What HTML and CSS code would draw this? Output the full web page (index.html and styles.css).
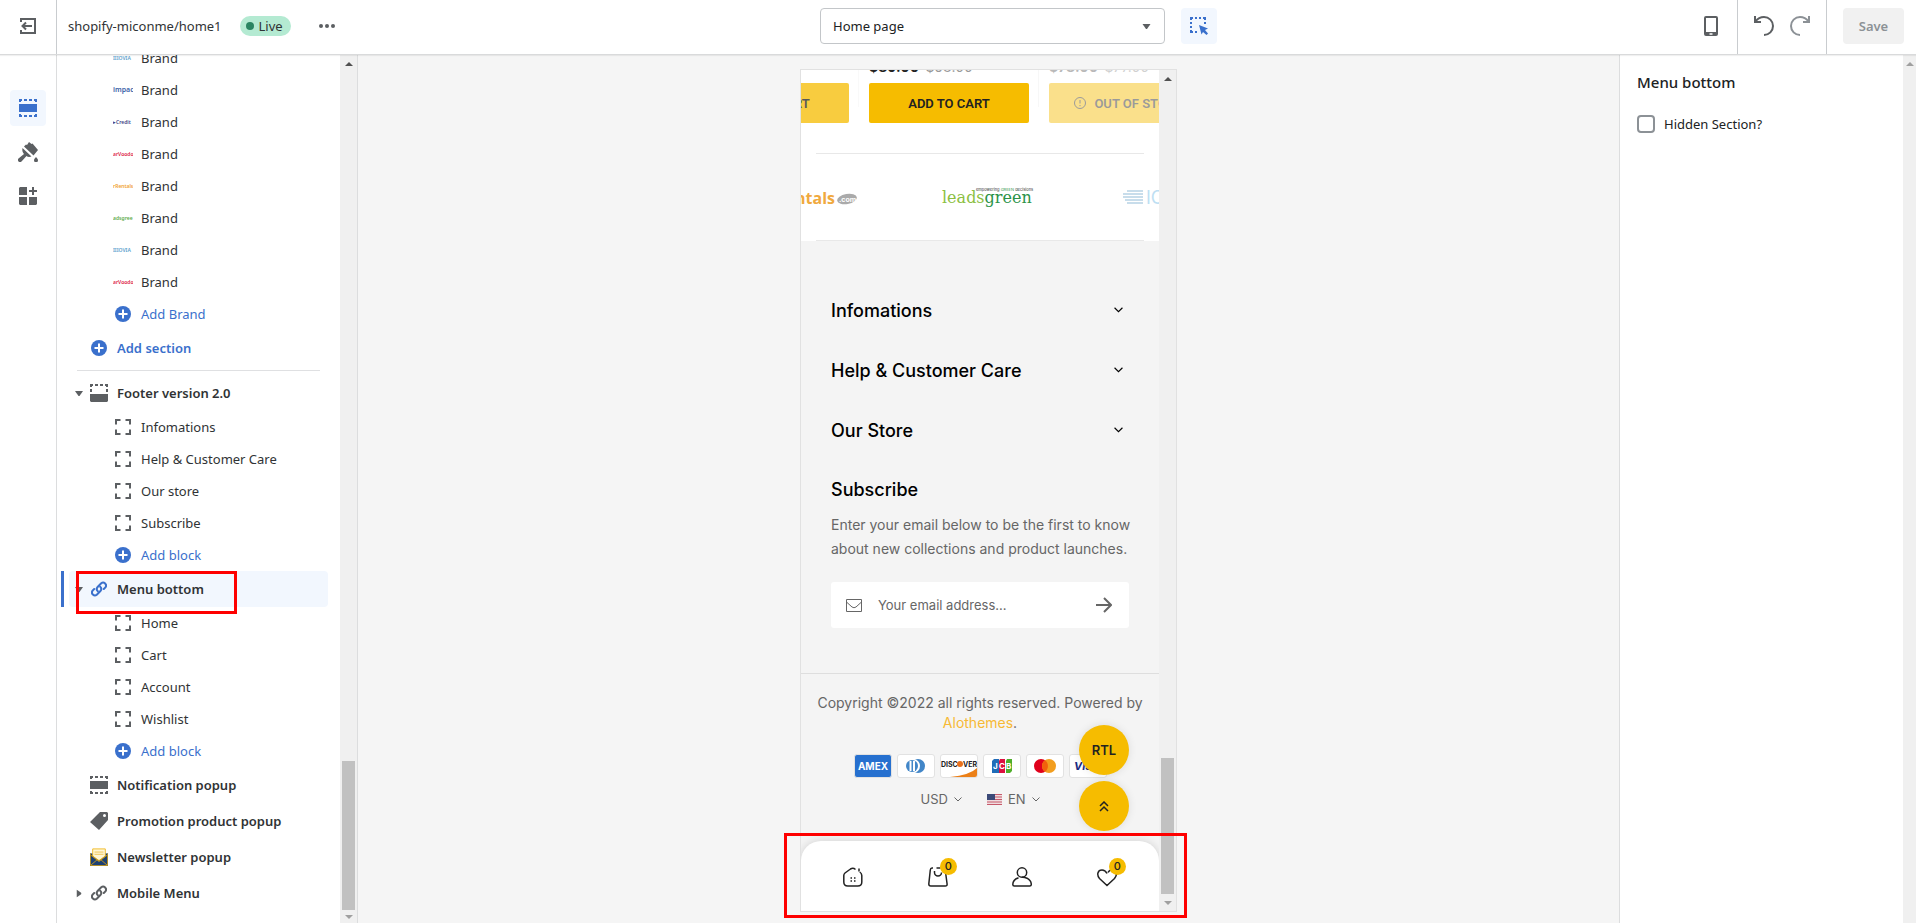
FILE: index.html
```
<!DOCTYPE html>
<html lang="en">
<head>
  <meta charset="utf-8">
  <title>Theme editor</title>
  <link rel="stylesheet" href="styles.css">
</head>
<body>
  <svg class="sprite" aria-hidden="true">
    <symbol id="i-block" viewBox="0 0 16 16">
      <path d="M1 5.500V1h4.500M10.500 1H15v4.500M15 10.500V15h-4.500M5.500 15H1v-4.500" fill="none" stroke="currentColor" stroke-width="2"/>
    </symbol>
    <symbol id="i-plus" viewBox="0 0 16 16">
      <circle cx="8" cy="8" r="8" fill="currentColor"/>
      <path d="M8 3.500v9M3.500 8h9" stroke="#fff" stroke-width="2"/>
    </symbol>
    <symbol id="i-section" viewBox="0 0 18 18">
      <path d="M0 5h18v8H0z" fill="currentColor"/>
      <path d="M0 1h3M5 1h3M10 1h3M15 1h3M0 17h3M5 17h3M10 17h3M15 17h3M1 0v3M17 0v3M1 15v3M17 15v3" stroke="currentColor" stroke-width="2"/>
    </symbol>
    <symbol id="i-footer" viewBox="0 0 18 18">
      <path d="M0 10h18v7l-1 1H1l-1-1z" fill="currentColor"/>
      <path d="M0 1h3M5 1h3M10 1h3M15 1h3M1 0v3M17 0v3M1 5v3M17 5v3" stroke="currentColor" stroke-width="2"/>
    </symbol>
    <symbol id="i-link" viewBox="0 0 16 16">
      <g fill="none" stroke="currentColor" stroke-width="2" stroke-linecap="round">
        <path d="M6.800 10.200a3 3 0 0 1-.2-4.200l3.600-3.800a3 3 0 0 1 4.200 4.200L12.800 8"/>
        <path d="M9.200 5.800a3 3 0 0 1 .2 4.200l-3.600 3.800a3 3 0 0 1-4.200-4.200L3.200 8"/>
      </g>
    </symbol>
    <symbol id="i-down" viewBox="0 0 8 5">
      <path d="M0 0h8L4.500 5h-1z" fill="currentColor"/>
    </symbol>
    <symbol id="i-chevron" viewBox="0 0 8 5">
      <path d="M.5.5 4 4 7.500.5" fill="none" stroke="currentColor"/>
    </symbol>
  </svg>

  <header class="topbar">
    <div class="topbar-exit">
      <button class="icon-btn" aria-label="Exit">
        <svg width="16" height="16" viewBox="0 0 16 16" fill="none" stroke="currentColor" stroke-width="2"><path d="M1 4V1h14v14H1v-3M12 8H3M6 4.500 2.500 8 6 11.500"/></svg>
      </button>
    </div>
    <div class="topbar-title">
      <span class="theme-name">shopify-miconme/home1</span>
      <span class="badge"><span class="badge-dot"></span>Live</span>
      <button class="icon-btn" aria-label="More actions">
        <svg width="16" height="4" viewBox="0 0 16 4" fill="currentColor"><circle cx="2" cy="2" r="2"/><circle cx="8" cy="2" r="2"/><circle cx="14" cy="2" r="2"/></svg>
      </button>
    </div>
    <div class="topbar-center">
      <div class="page-select">
        <select aria-label="Page"><option>Home page</option></select>
        <svg class="page-caret" width="9" height="5"><use href="#i-down"/></svg>
      </div>
      <button class="icon-btn active" aria-label="Toggle inspector">
        <svg width="18" height="18" viewBox="0 0 18 18" fill="none" stroke="currentColor" stroke-width="2"><path d="M0 1h3M5 1h2M9 1h2M13 1h3M1 0v3M1 5v2M1 9v2M1 13v3M0 15h3M5 15h2M15 0v3M15 5v2"/><path d="m9 8 9 3.500-3 1.500 3 3.500-1.500 1.500-3.500-3-1.500 2.500z" fill="currentColor" stroke="none"/></svg>
      </button>
    </div>
    <div class="topbar-group device">
      <button class="icon-btn" aria-label="Mobile view">
        <svg width="14" height="20" viewBox="0 0 14 20"><path d="M2 0h10a2 2 0 0 1 2 2v16a2 2 0 0 1-2 2H2a2 2 0 0 1-2-2V2a2 2 0 0 1 2-2zm0 2v14h10V2zm3.500 15.300v1.400h3v-1.400z" fill="currentColor" fill-rule="evenodd"/></svg>
      </button>
    </div>
    <div class="topbar-group">
      <button class="icon-btn" aria-label="Undo">
        <svg width="20" height="20" viewBox="0 0 20 20" fill="none" stroke="currentColor" stroke-width="2"><path d="M1 0v6h6M1.500 5.500C3.500 2.700 6.500 1 10 1a9 9 0 0 1 9 9c0 5-4 9-9 9"/></svg>
      </button>
      <button class="icon-btn muted" aria-label="Redo">
        <svg width="20" height="20" viewBox="0 0 20 20" fill="none" stroke="currentColor" stroke-width="2"><path d="M19 0v6h-6M18.500 5.500C16.500 2.700 13.500 1 10 1a9 9 0 0 0-9 9c0 5 4 9 9 9"/></svg>
      </button>
    </div>
    <div class="topbar-group save">
      <button class="save-btn" disabled>Save</button>
    </div>
  </header>

  <div class="layout">
    <nav class="rail">
      <button class="icon-btn active" aria-label="Sections"><svg width="18" height="18"><use href="#i-section"/></svg></button>
      <button class="icon-btn" aria-label="Theme settings">
        <svg width="20" height="20" viewBox="0 0 20 20" fill="currentColor"><path d="m11 0 2.500 2 1-.5 5.500 6.500-4.500 5.500L6 4.500 8 2.500l1 .5z"/><path d="m4.500 6 9 8.500c-2 .8-4 .5-5-.5L3.500 19.500a2 2 0 0 1-3-3L6 12c-1.500-1.500-2-3.500-1.500-6zM18 15c1.200 1.500 2 2.300 2 3.200a2 2 0 0 1-4 0c0-.9.800-1.700 2-3.200z"/></svg>
      </button>
      <button class="icon-btn" aria-label="App embeds">
        <svg width="18" height="18" viewBox="0 0 18 18" fill="currentColor"><path d="M1 0h7v8H0V1zM0 10h8v8H1l-1-1zM10 10h8v7l-1 1h-7zM13 0h2v3h3v2h-3v3h-2V5h-3V3h3z"/></svg>
      </button>
    </nav>

    <aside class="sidebar">
      <div class="tree">
        <div class="row block"><span class="thumb sky">IIIOVIA</span>Brand</div>
        <div class="row block"><span class="thumb navy">impac</span>Brand</div>
        <div class="row block"><span class="thumb indigo">▸Credit</span>Brand</div>
        <div class="row block"><span class="thumb red">arVoodo</span>Brand</div>
        <div class="row block"><span class="thumb orange">rRentals</span>Brand</div>
        <div class="row block"><span class="thumb green">adsgree</span>Brand</div>
        <div class="row block"><span class="thumb sky">IIIOVIA</span>Brand</div>
        <div class="row block"><span class="thumb red">arVoodo</span>Brand</div>
        <button class="row block add"><svg class="icon"><use href="#i-plus"/></svg>Add Brand</button>
        <button class="row section add"><span class="toggle"></span><svg class="icon"><use href="#i-plus"/></svg>Add section</button>
        <hr class="tree-divider">

        <div class="row section"><svg class="toggle"><use href="#i-down"/></svg><svg class="icon"><use href="#i-footer"/></svg>Footer version 2.0</div>
        <div class="row block"><svg class="icon"><use href="#i-block"/></svg>Infomations</div>
        <div class="row block"><svg class="icon"><use href="#i-block"/></svg>Help &amp; Customer Care</div>
        <div class="row block"><svg class="icon"><use href="#i-block"/></svg>Our store</div>
        <div class="row block"><svg class="icon"><use href="#i-block"/></svg>Subscribe</div>
        <button class="row block add"><svg class="icon"><use href="#i-plus"/></svg>Add block</button>

        <div class="row section selected"><svg class="toggle"><use href="#i-down"/></svg><svg class="icon small"><use href="#i-link"/></svg>Menu bottom<span class="mark mark-row"></span></div>
        <div class="row block"><svg class="icon"><use href="#i-block"/></svg>Home</div>
        <div class="row block"><svg class="icon"><use href="#i-block"/></svg>Cart</div>
        <div class="row block"><svg class="icon"><use href="#i-block"/></svg>Account</div>
        <div class="row block"><svg class="icon"><use href="#i-block"/></svg>Wishlist</div>
        <button class="row block add"><svg class="icon"><use href="#i-plus"/></svg>Add block</button>

        <div class="row section"><span class="toggle"></span><svg class="icon"><use href="#i-section"/></svg>Notification popup</div>
        <div class="row section"><span class="toggle"></span>
          <svg class="icon" viewBox="0 0 18 18"><path d="M10 0h7l1 1v7l-9 10-9-8zm4.500 2a1.500 1.500 0 1 0 0 3 1.500 1.500 0 0 0 0-3z" fill="currentColor" fill-rule="evenodd"/></svg>Promotion product popup</div>
        <div class="row section"><span class="toggle"></span>
          <svg class="icon" viewBox="0 0 20 20">
            <path d="M0 6h20v14H0z" fill="#1d4073"/>
            <path d="M3 1h14v8l-7 5-7-5z" fill="#fff6d6" stroke="#efb81c"/>
            <path d="M5 4.500h10M5 7h10" stroke="#f0c24c"/>
            <path d="M.5 6v13.500h19V6M1 8l9 7 9-7M1 19l7-6M19 19l-7-6" fill="none" stroke="#c99a1c"/>
          </svg>Newsletter popup</div>
        <div class="row section"><svg class="toggle closed"><use href="#i-down"/></svg><svg class="icon small"><use href="#i-link"/></svg>Mobile Menu</div>
      </div>
      <div class="scrollbar">
        <span class="arrow up"></span>
        <span class="thumb-bar"></span>
        <span class="arrow down off"></span>
      </div>
    </aside>

    <main class="canvas">
      <div class="phone">
        <div class="store">
          <div class="products">
            <div class="product side">
              <div class="price">$109.00 <del>$115.00</del></div>
              <button class="cart-btn">ADD TO CART</button>
            </div>
            <div class="product">
              <div class="price">$89.00 <del>$98.00</del></div>
              <button class="cart-btn">ADD TO CART</button>
            </div>
            <div class="product sold-out">
              <div class="price">$78.00 <del>$77.00</del></div>
              <button class="cart-btn">
                <svg width="12" height="12" viewBox="0 0 12 12" fill="none" stroke="currentColor"><circle cx="6" cy="6" r="5.500"/><path d="M6 3v3.500M6 8v1.200"/></svg>
                OUT OF STOCK
              </button>
            </div>
          </div>
          <div class="brands">
            <svg viewBox="0 0 180 40">
              <text x="120" y="27" font-size="16" font-weight="700" fill="#f0a93f" text-anchor="end" class="rentals">rRentals</text>
              <ellipse cx="132" cy="22" rx="10" ry="5" fill="#aaa" transform="rotate(-10 132 22)"/>
              <text x="124" y="25" font-size="7" font-weight="700" fill="#fff">.com</text>
            </svg>
            <svg viewBox="0 0 180 40">
              <text x="47" y="26" font-size="16" class="leads"><tspan fill="#8cc03f">leads</tspan><tspan fill="#2b9348">green</tspan></text>
              <text x="81" y="14" font-size="4" fill="#333">empowering <tspan fill="#2b9348">GREEN</tspan> decisions</text>
            </svg>
            <svg viewBox="0 0 180 40" class="faded">
              <path d="M52 14h16M48 17h20M48 20h20M50 23h18M52 26h16" stroke="#9fc3dd" stroke-width="1.500"/>
              <text x="71" y="27" font-size="18" fill="#a9d5ef">IOVIA</text>
            </svg>
          </div>
          <footer class="store-footer">
            <button class="fold">Infomations<svg width="9" height="6"><use href="#i-chevron"/></svg></button>
            <button class="fold">Help &amp; Customer Care<svg width="9" height="6"><use href="#i-chevron"/></svg></button>
            <button class="fold">Our Store<svg width="9" height="6"><use href="#i-chevron"/></svg></button>
            <h2 class="subscribe-title">Subscribe</h2>
            <p class="intro">Enter your email below to be the first to know about new collections and product launches.</p>
            <form class="subscribe">
              <svg width="16" height="13" viewBox="0 0 16 13" fill="none" stroke="currentColor"><path d="M.5.5h15v12H.5zM.5 3 6 8q2 1.500 4 0l5.500-5"/></svg>
              <input type="email" placeholder="Your email address..." aria-label="Your email address">
              <button class="send" aria-label="Subscribe">
                <svg width="16" height="16" viewBox="0 0 16 16" fill="none" stroke="currentColor" stroke-width="2"><path d="M0 8h14M8 1l7 7-7 7"/></svg>
              </button>
            </form>
          </footer>
          <div class="legal">
            <p>Copyright ©2022 all rights reserved. Powered by <a href="#">Alothemes</a>.</p>
            <div class="payments">
              <svg class="amex" viewBox="0 0 36 22"><text x="18" y="15" font-size="10" font-weight="700" fill="#fff" text-anchor="middle">AMEX</text></svg>
              <svg viewBox="0 0 36 22"><circle cx="20" cy="11" r="7" fill="#4286c8"/><circle cx="15" cy="11" r="7" fill="#fff"/><circle cx="14" cy="11" r="6" fill="#4286c8"/><path d="M12.500 6v10M16 6v10" stroke="#fff" stroke-width="2"/></svg>
              <svg viewBox="0 0 36 22"><path d="M9 22q20-2 27-9v9z" fill="#ec8018"/><text x="0" y="12" font-size="7" font-weight="700" fill="#222">DISC</text><circle cx="19" cy="9" r="3" fill="#e9711c"/><text x="22" y="12" font-size="7" font-weight="700" fill="#222">VER</text></svg>
              <svg viewBox="0 0 36 22"><path d="M10 4h5v14H8V6z" fill="#1f6cb8"/><path d="M16 4h5v14h-6V6z" fill="#dd1040"/><path d="M23 4h5v12l-2 2h-4V6z" fill="#4fae2a"/><text x="9" y="14" font-size="8" font-weight="700" fill="#fff">J</text><text x="15" y="14" font-size="8" font-weight="700" fill="#fff">C</text><text x="22" y="14" font-size="8" font-weight="700" fill="#fff">B</text></svg>
              <svg viewBox="0 0 36 22"><circle cx="14" cy="11" r="7" fill="#e0001b"/><circle cx="22" cy="11" r="7" fill="#f29e1f"/><path d="M18 5.300a7 7 0 0 1 0 11.400 7 7 0 0 1 0-11.400z" fill="#f2610c"/></svg>
              <svg viewBox="0 0 36 22"><text x="4" y="15" font-size="11" font-weight="700" font-style="italic" fill="#1b2a80">VISA</text></svg>
            </div>
            <div class="locale">
              <button>USD<svg width="8" height="5"><use href="#i-chevron"/></svg></button>
              <button>
                <svg class="flag" width="15" height="11" viewBox="0 0 15 11"><path d="M0 0h15v11H0z" fill="#f0dcdf"/><path d="M0 .5h15M0 3h15M0 5.500h15M0 8h15M0 10.500h15" stroke="#c65a6b"/><path d="M0 0h8v6H0z" fill="#3b4a78"/></svg>
                EN<svg width="8" height="5"><use href="#i-chevron"/></svg>
              </button>
            </div>
          </div>

          <div class="floating">
            <button>RTL</button>
            <button aria-label="Back to top">
              <svg width="10" height="11" viewBox="0 0 10 11" fill="none" stroke="currentColor" stroke-width="1.500"><path d="m1 5 4-4 4 4M1 10l4-4 4 4"/></svg>
            </button>
          </div>

          <nav class="bottom-nav">
            <a href="#" aria-label="Home"><svg width="20" height="20" viewBox="0 0 20 20"><path d="M16 4.500V1.500M12.500 2.500C10.500.700 9.500.700 7.500 2L2 6Q.800 7 .800 8.500V15q0 4 4 4h10q4 0 4-4V8.500q0-2-2-3.500"/><path d="M7.500 11h1.500M11 11h1.500M7.500 14h1.500M11 14h1.500"/></svg></a>
            <a href="#" aria-label="Cart"><svg width="20" height="20" viewBox="0 0 20 20"><path d="M5 1H4Q2.500 1 2.300 3L.800 17q0 2 2 2h14.500q2 0 1.800-2L17.500 5M8.500 1h4M6.500 4v1.500a3.500 3.500 0 0 0 7 0"/></svg><span class="count">0</span></a>
            <a href="#" aria-label="Account"><svg width="20" height="20" viewBox="0 0 20 20"><circle cx="10" cy="5.500" r="4.700"/><path d="M6.500 10.700C3 12 .800 14.500.800 17.500q0 1.500 1.500 1.500h15.500q1.500 0 1.500-1.500c0-3-2-5-4.300-6.300Q12.500 10 10 10.200"/></svg></a>
            <a href="#" aria-label="Wishlist"><svg width="20" height="20" viewBox="0 0 20 20"><path d="M11 5.500C12 3.500 13.500 3 15 3c5 0 5.500 5 2.500 8.500L10 18.500l-7.500-7C-.500 8 .500 3 5 3c2.500 0 4 1.500 5 3.500"/></svg><span class="count">0</span></a>
          </nav>
        </div>
        <div class="scrollbar">
          <span class="arrow up"></span>
          <span class="thumb-bar short"></span>
          <span class="arrow down"></span>
        </div>
        <span class="mark mark-nav"></span>
      </div>
    </main>

    <aside class="settings">
      <div class="settings-body">
        <h1>Menu bottom</h1>
        <label class="check"><input type="checkbox">Hidden Section?</label>
      </div>
      <div class="scrollbar narrow"><span class="arrow up off"></span></div>
    </aside>
  </div>
</body>
</html>
```
FILE: styles.css
```
* {
  box-sizing: border-box;
}

body {
  margin: 0;
  height: 100vh;
  display: flex;
  flex-direction: column;
  overflow: hidden;
  font-family: "Noto Sans", "Open Sans", sans-serif;
  font-size: 13px;
  color: #303335;
  background: #fff;
}

button,
input,
select {
  font: inherit;
  color: inherit;
}

button {
  border: none;
  background: none;
  padding: 0;
  cursor: pointer;
}

svg {
  flex: none;
}

.sprite {
  position: absolute;
  width: 0;
  height: 0;
}

/* Top bar */
.topbar {
  display: flex;
  flex: none;
  height: 55px;
  border-bottom: 1px solid #d9dadb;
  box-shadow: 0 1px 1px rgba(0, 0, 0, 0.06);
  position: relative;
  z-index: 2;
  background: #fff;
}

.topbar-exit {
  width: 57px;
  padding: 8px 10px;
  border-right: 1px solid #c9cccf;
}

.icon-btn {
  display: flex;
  flex: none;
  align-items: center;
  justify-content: center;
  width: 36px;
  height: 36px;
  border-radius: 4px;
  color: #5c5f62;
}

.icon-btn.active {
  background: #f2f7fe;
  color: #3a70cc;
}

.icon-btn.muted {
  color: #8c9196;
}

.topbar-title {
  width: 300px;
  display: flex;
  align-items: center;
  padding: 0 12px 3px 11px;
}

.theme-name {
  white-space: nowrap;
  margin-right: 18px;
}

.badge {
  display: flex;
  align-items: center;
  gap: 5px;
  height: 20px;
  padding: 0 8px 0 6px;
  margin-right: 18px;
  border-radius: 10px;
  background: #b4ead2;
}

.badge-dot {
  width: 8px;
  height: 8px;
  border-radius: 50%;
  background: #2a8562;
}

.topbar-center {
  flex: 1;
  display: flex;
  justify-content: center;
  gap: 16px;
  padding-top: 8px;
}

.page-select {
  position: relative;
  flex: 0 1 345px;
  height: 36px;
}

.page-select select {
  appearance: none;
  width: 100%;
  height: 100%;
  padding: 0 12px;
  border: 1px solid #c3c6c9;
  border-radius: 4px;
  background: #fff;
  color: #202223;
}

.page-caret {
  position: absolute;
  right: 14px;
  top: 16px;
  color: #5c5f62;
  pointer-events: none;
}

.topbar-group {
  display: flex;
  padding: 8px;
  border-left: 1px solid #c9cccf;
}

.topbar-group.device {
  border-left: none;
  padding-left: 13px;
}

.topbar-group.save {
  padding: 8px 12px 8px 16px;
}

.save-btn {
  width: 61px;
  height: 36px;
  border-radius: 4px;
  background: #f1f1f1;
  color: #8c9196;
  font-weight: 600;
}

/* Layout */
.layout {
  flex: 1;
  display: flex;
  min-height: 0;
}

.rail {
  flex: none;
  display: flex;
  flex-direction: column;
  gap: 8px;
  width: 57px;
  padding: 35px 10px;
  border-right: 1px solid #dcddde;
}

.sidebar {
  flex: none;
  display: flex;
  width: 301px;
  border-right: 1px solid #dcddde;
}

/* Section list, scrolled to its end */
.tree {
  flex: 1;
  display: flex;
  flex-direction: column;
  justify-content: flex-end;
  overflow: hidden;
  padding: 0 12px 12px;
}

.row {
  display: flex;
  flex: none;
  align-items: center;
  text-align: left;
  white-space: nowrap;
}

.row.block {
  height: 32px;
  padding-left: 44px;
}

.row.section {
  height: 36px;
  padding-left: 6px;
  border-radius: 4px;
  font-weight: 600;
}

.row .icon {
  width: 18px;
  height: 18px;
  margin-right: 9px;
  color: #5c5f62;
}

.row .icon.small,
.row.add .icon,
.row.block .icon {
  width: 16px;
  height: 16px;
  margin: 0 10px 0 1px;
}

.row.block .icon {
  margin: 0 10px 0 2px;
}

.row.add,
.row.add .icon,
.row.selected .icon {
  color: #3a70cc;
}

.toggle {
  flex: none;
  width: 8px;
  height: 5px;
  margin-right: 7px;
  color: #5c5f62;
}

.toggle.closed {
  transform: rotate(-90deg);
}

.row.selected {
  position: relative;
  background: #f2f7fe;
}

.row.selected::before {
  content: "";
  position: absolute;
  left: -8px;
  width: 3px;
  height: 36px;
  background: #3a70cc;
}

.thumb {
  width: 20px;
  margin-right: 8px;
  overflow: hidden;
  font-size: 5px;
  font-weight: 600;
  line-height: 10px;
}

.sky { color: #5aa0cc; }
.navy { color: #3c62a8; font-size: 7px; }
.indigo { color: #3d3f86; }
.red { color: #dc2448; }
.orange { color: #f0a030; }
.green { color: #5cab4a; }

.tree-divider {
  flex: none;
  width: 243px;
  height: 1px;
  margin: 4px 8px;
  border: none;
  background: #dfe0e2;
}

/* Scrollbars */
.scrollbar {
  flex: none;
  display: flex;
  flex-direction: column;
  align-items: center;
  width: 17px;
  background: #f0f0f0;
}

.scrollbar.narrow {
  width: 13px;
}

.arrow {
  display: flex;
  align-items: center;
  justify-content: center;
  height: 17px;
  color: #505050;
}

.arrow::before {
  content: "";
  border: 4px solid transparent;
  border-top: none;
  border-bottom-color: currentColor;
}

.arrow.down {
  color: #a0a0a0;
}

.arrow.down::before {
  transform: rotate(180deg);
}

.arrow.off {
  color: #a0a0a0;
}

.sidebar .arrow.down {
  height: 13px;
}

.thumb-bar {
  width: 13px;
  height: 149px;
  margin-top: auto;
  background: #c1c1c1;
}

.thumb-bar.short {
  height: 136px;
}

/* Preview */
.canvas {
  flex: 1;
  display: flex;
  justify-content: center;
  min-width: 0;
  padding: 14px 16px 11px;
  background: #f5f5f5;
}

.phone {
  position: relative;
  display: flex;
  width: 377px;
  border: 1px solid #e1e1e1;
}

.store {
  position: relative;
  flex: 1;
  min-width: 0;
  display: flex;
  flex-direction: column;
  justify-content: flex-end;
  overflow: hidden;
  background: #f4f4f4;
  font-family: Inter, Roboto, sans-serif;
  font-size: 13px;
  color: #666;
}

.products,
.brands {
  flex: none;
  display: flex;
  background: #fff;
}

.products {
  height: 83px;
}

.product {
  flex: none;
  width: 180px;
  height: 37px;
  padding: 0 10px;
  border-right: 1px solid #f7f7f7;
}

.product:first-child {
  margin-left: -122px;
}

.product:nth-child(2) .price {
  color: #222;
}

.price {
  height: 26px;
  margin-top: -13px;
  line-height: 20px;
  font-size: 14px;
  font-weight: 700;
}

.price del {
  margin-left: 3px;
  font-weight: 400;
  color: #999;
}

.cart-btn {
  display: flex;
  align-items: center;
  justify-content: center;
  gap: 8px;
  width: 160px;
  height: 40px;
  border-radius: 2px;
  background: #f6bc00;
  color: #222;
  font-family: Roboto, sans-serif;
  font-weight: 600;
  white-space: nowrap;
}

.side {
  opacity: 0.75;
}

.sold-out {
  opacity: 0.45;
}

.brands {
  align-items: center;
  height: 88px;
  background:
    linear-gradient(#e8e8e8, #e8e8e8) center top / calc(100% - 30px) 1px no-repeat,
    linear-gradient(#e8e8e8, #e8e8e8) center bottom / calc(100% - 30px) 1px no-repeat,
    #fff;
}

.brands svg {
  width: 180px;
  height: 40px;
}

.brands svg:first-child {
  margin-left: -86px;
}

.brands .faded {
  opacity: 0.75;
}

.rentals {
  font-family: "Open Sans", sans-serif;
}

.leads {
  font-family: "DejaVu Serif", serif;
}

.store-footer {
  flex: none;
  padding: 39px 30px 45px;
}

.fold,
.subscribe-title {
  font-size: 18px;
  font-weight: 500;
  color: #000;
}

.fold {
  display: flex;
  align-items: center;
  justify-content: space-between;
  width: 100%;
  height: 60px;
  padding-right: 6px;
}

.subscribe-title {
  margin: 0;
  padding: 18px 0 11px;
  line-height: 24px;
}

.intro {
  margin: 0 -10px 0 0;
  font-size: 14px;
  line-height: 24px;
}

.subscribe {
  display: flex;
  align-items: center;
  height: 46px;
  margin: 21px 0 0;
  padding: 0 17px 0 15px;
  border-radius: 3px;
  background: #fff;
}

.subscribe input {
  flex: 1;
  min-width: 0;
  padding: 0 16px;
  border: none;
  background: none;
}

.subscribe input::placeholder {
  color: #666;
}

.send {
  display: flex;
}

.legal {
  flex: none;
  display: flex;
  flex-direction: column;
  align-items: center;
  padding: 19px 10px 102px;
  border-top: 1px solid #dedede;
  text-align: center;
}

.legal p {
  margin: 0;
  font-size: 14px;
  line-height: 20px;
}

.legal a {
  color: #f7b935;
  text-decoration: none;
}

.payments {
  display: flex;
  gap: 5px;
  margin-top: 21px;
}

.payments svg {
  width: 38px;
  height: 24px;
  border: 1px solid #e2e2e2;
  border-radius: 3px;
  background: #fff;
}

.payments .amex {
  background: #2670cf;
}

.locale {
  display: flex;
  gap: 25px;
  margin-top: 11px;
}

.locale button {
  display: flex;
  align-items: center;
  gap: 6px;
  height: 20px;
}

.floating {
  position: absolute;
  right: 30px;
  bottom: 80px;
  display: flex;
  flex-direction: column;
  gap: 6px;
}

.floating button {
  display: flex;
  align-items: center;
  justify-content: center;
  width: 50px;
  height: 50px;
  border-radius: 50%;
  background: #f6bc00;
  box-shadow: 0 0 8px rgba(0, 0, 0, 0.1);
  color: #222;
  font-weight: 600;
}

.bottom-nav {
  position: absolute;
  left: 0;
  right: 0;
  bottom: 0;
  display: flex;
  justify-content: space-around;
  align-items: center;
  height: 70px;
  padding: 2px 10px 0;
  border-radius: 20px 20px 0 0;
  background: #fff;
  box-shadow: 0 0 10px rgba(0, 0, 0, 0.15);
}

.bottom-nav a {
  position: relative;
  display: flex;
  color: #222;
}

.bottom-nav svg {
  fill: none;
  stroke: currentColor;
  stroke-width: 1.500;
}

.count {
  position: absolute;
  left: 12px;
  top: -9px;
  width: 17px;
  height: 17px;
  border-radius: 50%;
  background: #f6bc00;
  font-size: 11px;
  font-weight: 500;
  line-height: 17px;
  text-align: center;
}

/* Highlight frames */
.mark {
  position: absolute;
  z-index: 3;
  border: 3px solid #fe0000;
  pointer-events: none;
}

.mark-row {
  left: 7px;
  top: 0;
  width: 161px;
  height: 43px;
}

.mark-nav {
  left: -17px;
  right: -11px;
  bottom: -7px;
  height: 85px;
}

/* Settings panel */
.settings {
  flex: none;
  display: flex;
  width: 297px;
  border-left: 1px solid #dcddde;
}

.settings-body {
  flex: 1;
  padding: 15px 17px;
}

.settings h1 {
  margin: 0 0 18px;
  font-size: 15px;
  line-height: 24px;
  font-weight: 500;
  color: #202223;
}

.check {
  display: flex;
  align-items: center;
  gap: 9px;
  height: 24px;
  color: #202223;
}

.check input {
  appearance: none;
  width: 18px;
  height: 18px;
  margin: 0;
  border: 2px solid #8c9196;
  border-radius: 4px;
  background: #fff;
}
```
